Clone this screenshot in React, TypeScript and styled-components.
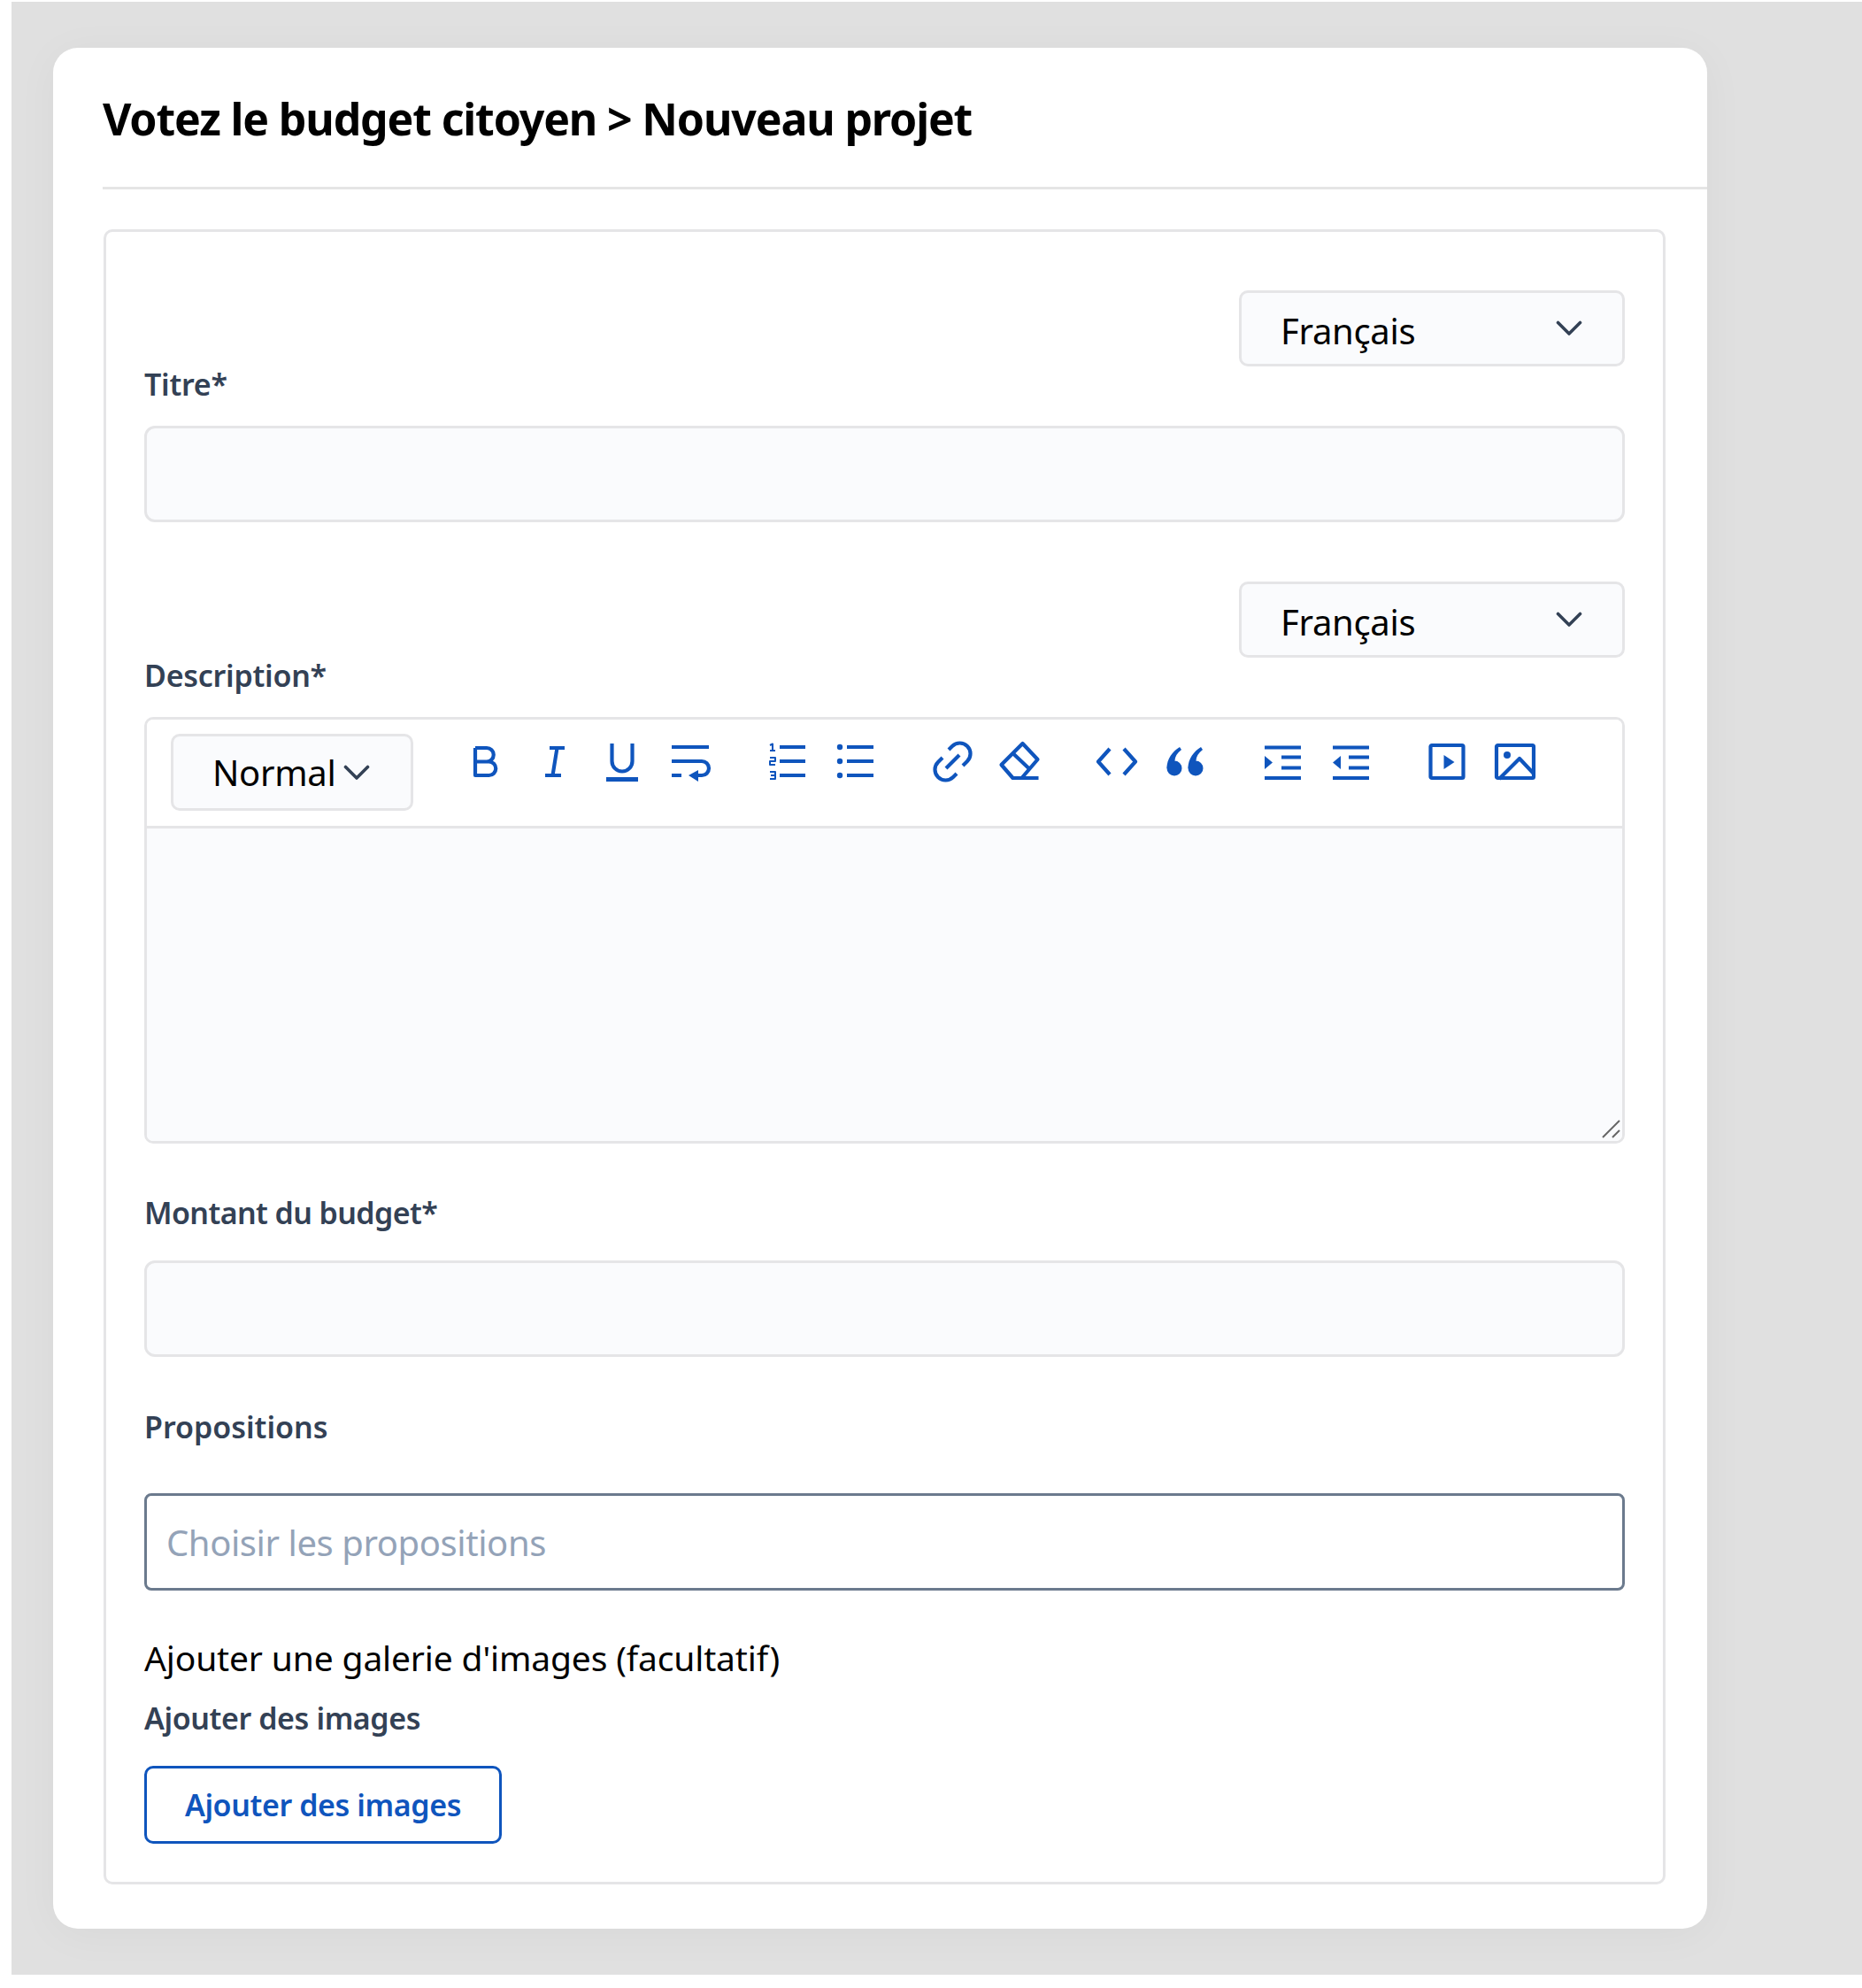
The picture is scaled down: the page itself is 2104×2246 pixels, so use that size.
import styled, { createGlobalStyle } from 'styled-components';

const GlobalStyle = createGlobalStyle`
  html, body {
    margin: 0;
    padding: 0;
    background: #fff;
    font-family: "Noto Sans", "Open Sans", sans-serif;
  }
  * { box-sizing: border-box; }
`;

function Chevron () {
  return (
    <ChevronSvg viewBox="0 0 30 18">
      <polyline points="2.5,2.5 15,15 27.5,2.5" />
    </ChevronSvg>
  );
}

const toolGroups = [
  [
    <>
      <path d="M12 8v31h15.5a7.75 7.75 0 0 0 0-15.5H12M12 8h13a7.75 7.75 0 0 1 0 15.5" />
    </>,
    <>
      <path d="M19 8h17M14 39h18M27.5 8l-5 31" />
    </>,
    <>
      <path d="M12.5 3v20a11.5 11.5 0 0 0 23 0V3" />
      <path d="M6 43.5h36" strokeWidth="5" />
    </>,
    <>
      <path d="M3 7h42M3 23h34a8 8 0 0 1 0 16h-8M3 39h11" />
      <polygon className="solid" points="22,39 33,33 33,46" />
    </>,
  ],
  [
    <>
      <path d="M16 7h29M16 23h29M16 39h29" />
      <path d="M5 5l3-1.5V11M5 11h6M5 19h6v4H5v4h6M5 35h6v4H6M11 39v4H5" strokeWidth="2" />
    </>,
    <>
      <path d="M15 7h30M15 23h30M15 39h30" />
      <circle className="solid" cx="7" cy="7" r="3.2" />
      <circle className="solid" cx="7" cy="23" r="3.2" />
      <circle className="solid" cx="7" cy="39" r="3.2" />
    </>,
  ],
  [
    <>
      <path d="M20 10l4-4a12 12 0 0 1 17 17l-5 5M29 37l-4 4a12 12 0 0 1-17-17l5-5M17 31l15-15" />
    </>,
    <>
      <path d="M26.5 3l17 18-18 21h-10L2.5 27zM15.5 14l19 18M15.5 42h29" />
    </>,
  ],
  [
    <>
      <path d="M16 9L3 23.5 16 38M32 9l13 14.5L32 38" />
    </>,
    <>
      <path className="solid" d="M3.5 31C3.5 20 10 12 18 7l2 3c-5 4-7.5 8-7.5 12.5z" />
      <circle className="solid" cx="12" cy="31" r="8.5" />
      <path className="solid" d="M27.5 31c0-11 6.5-19 14.5-24l2 3c-5 4-7.5 8-7.5 12.5z" />
      <circle className="solid" cx="36" cy="31" r="8.5" />
    </>,
  ],
  [
    <>
      <path d="M4 7.5h41M23 18.5h22M23 30.5h22M4 42h41" />
      <polygon className="solid" points="4,17 13,24.5 4,32" />
    </>,
    <>
      <path d="M4 7.5h41M22 18.5h23M22 30.5h23M4 42h41" />
      <polygon className="solid" points="13,17 4,24.5 13,32" />
    </>,
  ],
  [
    <>
      <rect x="5.5" y="5" width="37" height="37" rx="1.5" />
      <polygon className="solid" points="20.5,16 32.5,24 20.5,32" />
    </>,
    <>
      <rect x="3" y="5" width="42" height="37" rx="1.5" />
      <circle className="solid" cx="15" cy="16" r="4" />
      <path d="M6 43L29 20l16 17" />
    </>,
  ],
];

export default function App () {
  return (
    <Page>
      <GlobalStyle />
      <Card>
        <Title>Votez le budget citoyen &gt; Nouveau projet</Title>
        <Divider />
        <Panel>
          <LangRow>
            <LangSelect>
              <SelectText $shift={3}>Français</SelectText>
              <Chevron />
            </LangSelect>
          </LangRow>
          <Label>Titre*</Label>
          <TextInput />

          <LangRow $top={67}>
            <LangSelect>
              <SelectText $shift={3}>Français</SelectText>
              <Chevron />
            </LangSelect>
          </LangRow>
          <Label>Description*</Label>
          <Editor>
            <Toolbar>
              <FormatSelect>
                <SelectText $shift={0}>Normal</SelectText>
                <Chevron />
              </FormatSelect>
              <Tools>
                {toolGroups.map((group, index)=>(
                  <ToolGroup key={index}>
                    {group.map((icon, i)=>(
                      <ToolSlot key={i}>
                        <ToolIcon viewBox="0 0 48 48">{icon}</ToolIcon>
                      </ToolSlot>
                    ))}
                  </ToolGroup>
                ))}
              </Tools>
            </Toolbar>
            <EditorBody>
              <Grip viewBox="0 0 22 22">
                <path d="M1 20L20 1M12 20l8-8" />
              </Grip>
            </EditorBody>
          </Editor>

          <Label $top={58} $bottom={34} $track={-0.6}>Montant du budget*</Label>
          <TextInput />

          <Label $top={59} $bottom={55} $track={0}>Propositions</Label>
          <PickerInput placeholder="Choisir les propositions" />

          <GalleryTitle>Ajouter une galerie d'images (facultatif)</GalleryTitle>
          <Label $top={26} $bottom={34} $track={-0.4}>Ajouter des images</Label>
          <AddButton>Ajouter des images</AddButton>
        </Panel>
      </Card>
    </Page>
  );
}

const Page = styled.div`
  margin: 2px 0 15px 13px;
  padding: 52px 0 52px 47px;
  background-color: #e0e0e0;
`;
const Card = styled.div`
  width: 1869px;
  padding: 0 0 50px 56px;
  background-color: #fff;
  border-radius: 28px;
  box-shadow: 0 6px 50px rgba(0, 0, 0, 0.04);
`;
const Title = styled.h1`
  margin: 0;
  height: 157px;
  padding-top: 48px;
  font-size: 50px;
  line-height: 64px;
  font-weight: 700;
  letter-spacing: -1.15px;
  color: #000;
`;
const Divider = styled.div`
  height: 3px;
  background-color: #e5e5e5;
`;
const Panel = styled.div`
  width: 1765px;
  margin: 45px 0 0 1px;
  padding: 66px 43px 43px 43px;
  border: 3px solid #e5e5e7;
  border-radius: 10px;
`;
const LangRow = styled.div<{ $top?: number }>`
  display: flex;
  justify-content: flex-end;
  margin-top: ${(p) => p.$top ?? 0}px;
`;
const LangSelect = styled.div`
  display: flex;
  align-items: center;
  justify-content: space-between;
  width: 436px;
  height: 86px;
  padding: 0 45px 0 44px;
  background-color: #fafbfd;
  border: 3px solid #e5e5e7;
  border-radius: 10px;
`;
const SelectText = styled.span<{ $shift: number }>`
  font-size: 40px;
  line-height: 50px;
  letter-spacing: -0.3px;
  color: #000;
  position: relative;
  top: ${(p) => p.$shift}px;
`;
const ChevronSvg = styled.svg`
  width: 30px;
  height: 18px;
  flex: none;
  fill: none;
  stroke: #334155;
  stroke-width: 3.6;
  stroke-linecap: round;
  stroke-linejoin: round;
`;
const Label = styled.label<{ $top?: number; $bottom?: number; $track?: number }>`
  display: block;
  height: 40px;
  margin-top: ${(p) => p.$top ?? 0}px;
  margin-bottom: ${(p) => p.$bottom ?? 27}px;
  font-size: 34px;
  line-height: 40px;
  font-weight: 600;
  letter-spacing: ${(p) => p.$track ?? -0.25}px;
  color: #334155;
`;
const TextInput = styled.input`
  display: block;
  width: 100%;
  height: 109px;
  background-color: #fafbfd;
  border: 3px solid #e5e5e7;
  border-radius: 12px;
  outline: none;
`;
const PickerInput = styled.input`
  display: block;
  width: 100%;
  height: 110px;
  padding: 0 22px;
  font-family: inherit;
  font-size: 40px;
  letter-spacing: -0.42px;
  background-color: #fff;
  border: 3px solid #6b7a8d;
  border-radius: 8px;
  outline: none;
  &::placeholder { color: #94a3b8; opacity: 1; }
`;
const Editor = styled.div`
  height: 482px;
  display: flex;
  flex-direction: column;
  border: 3px solid #e5e5e7;
  border-radius: 10px;
  overflow: hidden;
`;
const Toolbar = styled.div`
  display: flex;
  align-items: flex-start;
  height: 123px;
  padding: 16px 0 0 27px;
  background-color: #fff;
  border-bottom: 3px solid #e5e5e7;
`;
const FormatSelect = styled.div`
  display: flex;
  align-items: center;
  gap: 9px;
  width: 274px;
  height: 87px;
  padding: 0 0 0 44px;
  background-color: #fafbfd;
  border: 3px solid #e5e5e7;
  border-radius: 10px;
`;
const Tools = styled.div`
  display: flex;
  gap: 32.5px;
  margin-left: 43px;
  margin-top: 8px;
`;
const ToolGroup = styled.div`
  display: flex;
`;
const ToolSlot = styled.div`
  display: flex;
  justify-content: center;
  width: 77px;
`;
const ToolIcon = styled.svg`
  width: 48px;
  height: 48px;
  flex: none;
  fill: none;
  stroke: #0f55bd;
  stroke-width: 4.2;
  stroke-linejoin: round;
  overflow: visible;
  .solid { fill: #0f55bd; stroke: none; }
`;
const EditorBody = styled.div`
  position: relative;
  flex: 1;
  background-color: #fafbfd;
`;
const Grip = styled.svg`
  position: absolute;
  right: 1px;
  bottom: 2px;
  width: 22px;
  height: 22px;
  fill: none;
  stroke: #666;
  stroke-width: 2;
`;
const GalleryTitle = styled.div`
  height: 44px;
  margin-top: 54px;
  font-size: 39px;
  line-height: 44px;
  letter-spacing: -0.15px;
  color: #000;
`;
const AddButton = styled.button`
  display: block;
  width: 404px;
  height: 88px;
  padding: 0;
  font-family: inherit;
  font-size: 34px;
  font-weight: 600;
  letter-spacing: -0.4px;
  color: #0f55bd;
  background-color: #fff;
  border: 3px solid #0f55bd;
  border-radius: 10px;
`;
